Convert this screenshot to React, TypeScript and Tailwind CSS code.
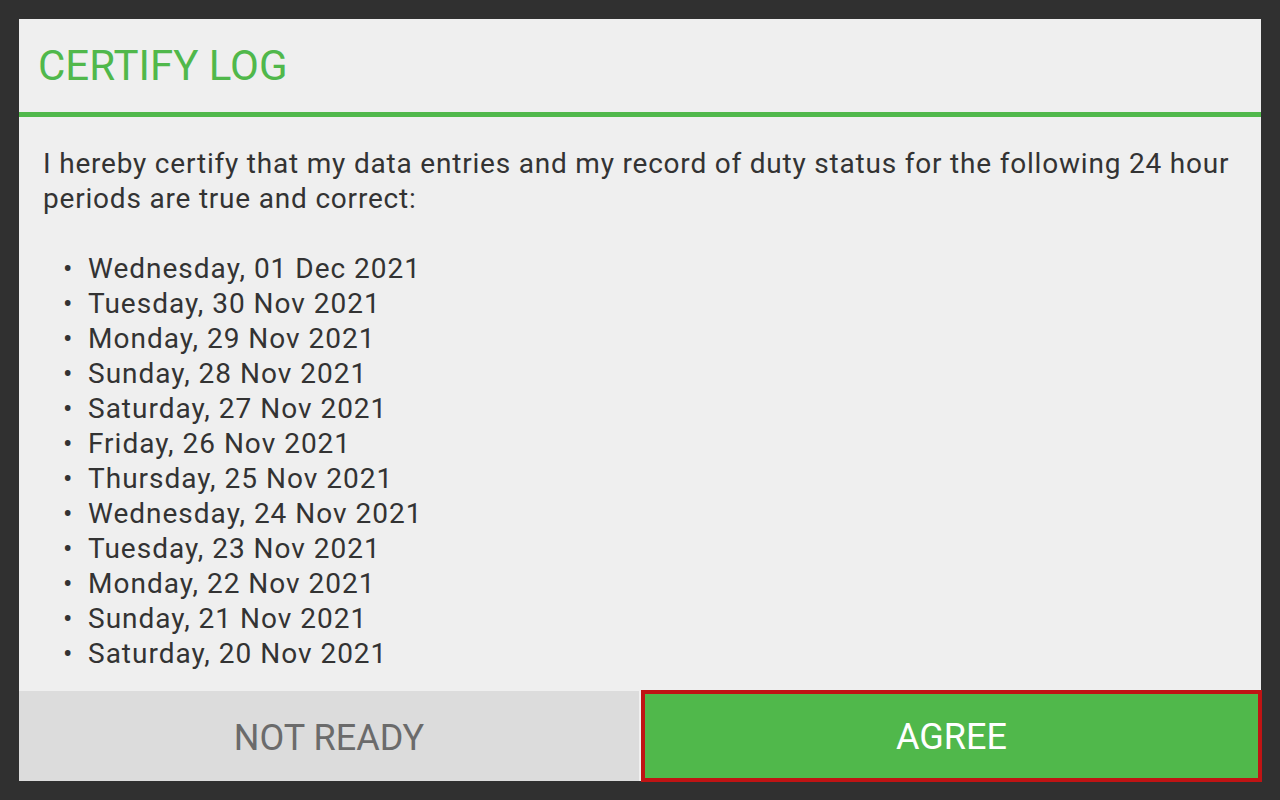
const days = [
  'Wednesday, 01 Dec 2021',
  'Tuesday, 30 Nov 2021',
  'Monday, 29 Nov 2021',
  'Sunday, 28 Nov 2021',
  'Saturday, 27 Nov 2021',
  'Friday, 26 Nov 2021',
  'Thursday, 25 Nov 2021',
  'Wednesday, 24 Nov 2021',
  'Tuesday, 23 Nov 2021',
  'Monday, 22 Nov 2021',
  'Sunday, 21 Nov 2021',
  'Saturday, 20 Nov 2021',
]

export default function App() {
  return (
    <div className="h-screen w-full bg-[#303030] p-[19px] font-['Roboto',sans-serif]">
      <div className="flex h-[762px] w-[1242px] flex-col bg-[#efefef]">
        {/* Header */}
        <div className="flex h-[98px] shrink-0 items-center border-b-[5px] border-[#50b84b] pl-[19px]">
          <h1 className="text-[42px] leading-none text-[#50b84b]">CERTIFY LOG</h1>
        </div>

        {/* Body */}
        <div className="flex-1 overflow-hidden px-[24px] pt-[29px] text-[28px] leading-[35px] tracking-[0.8px] text-[#333333]">
          <p>
            I hereby certify that my data entries and my record of duty status for the following 24 hour
            periods are true and correct:
          </p>
          <ul className="mt-[35px] pl-[20px] tracking-[1px]">
            {days.map((d) => (
              <li key={d} className="flex">
                <span className="w-[25px]">•</span>
                <span>{d}</span>
              </li>
            ))}
          </ul>
        </div>

        {/* Actions */}
        <div className="flex h-[90px] shrink-0 gap-[2px]">
          <button className="w-[620px] bg-[#dcdcdc] pt-[3px] text-[36px] text-[#6b6b6b]">NOT READY</button>
          <button className="-mt-[1px] -mr-[1px] h-[92px] flex-1 border-[4px] border-[#bf1414] bg-[#50b84b] pt-[2px] text-[36px] text-white">
            AGREE
          </button>
        </div>
      </div>
    </div>
  )
}
